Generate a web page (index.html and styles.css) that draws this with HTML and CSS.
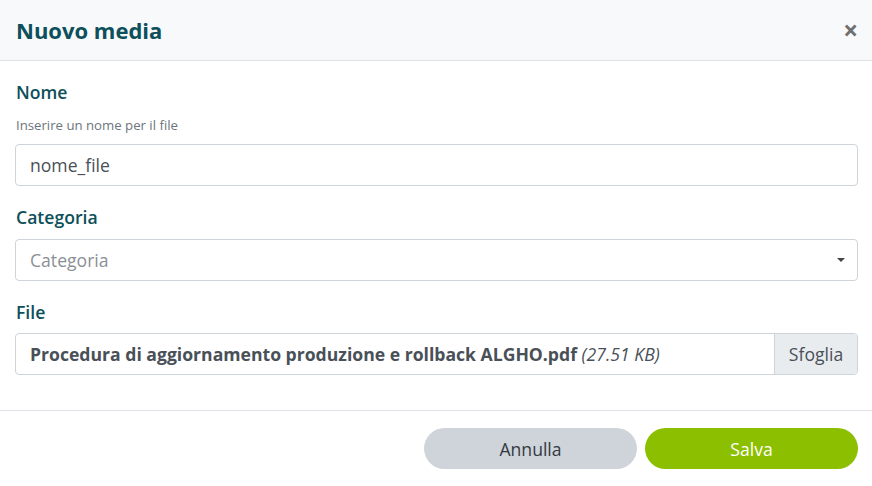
FILE: index.html
```html
<!DOCTYPE html>
<html lang="it">
<head>
<meta charset="utf-8">
<link rel="stylesheet" href="styles.css">
</head>
<body>
<div class="modal">
  <div class="modal-header">
    <h1 class="modal-title">Nuovo media</h1>
    <button class="close" type="button">&times;</button>
  </div>
  <div class="modal-body">
    <div class="field">
      <label class="label">Nome</label>
      <div class="help">Inserire un nome per il file</div>
      <div class="input">nome_file</div>
    </div>
    <div class="field">
      <label class="label">Categoria</label>
      <div class="input select"><span class="placeholder">Categoria</span><span class="caret"></span></div>
    </div>
    <div class="field">
      <label class="label">File</label>
      <div class="file-input">
        <div class="file-name"><span><b>Procedura di aggiornamento produzione e rollback ALGHO.pdf</b> <i>(27.51 KB)</i></span></div>
        <div class="browse">Sfoglia</div>
      </div>
    </div>
  </div>
  <div class="modal-footer">
    <button class="btn btn-cancel" type="button">Annulla</button>
    <button class="btn btn-save" type="button">Salva</button>
  </div>
</div>
</body>
</html>
```
FILE: styles.css
```css
* { box-sizing: border-box; }
html, body { margin: 0; padding: 0; background: #fff; }
body { font-family: "Open Sans", "Noto Sans", sans-serif; color: #495057; }
.modal { width: 872px; height: 486px; display: flex; flex-direction: column; }
.modal-header {
  height: 61px;
  background: #f7f9fa;
  border-bottom: 1px solid #dee2e6;
  display: flex; align-items: center; justify-content: space-between;
  padding: 0 14px 0 16px;
}
.modal-title { margin: 0; font-size: 22px; font-weight: 700; color: #0d4f5a; line-height: 1; }
.close {
  border: 0; background: none; padding: 0; font-family: inherit;
  font-size: 26px; font-weight: 700; color: #6f6f6f; line-height: 1; cursor: pointer;
}
.modal-body { padding: 18px 14px 0 15px; display: flex; flex-direction: column; gap: 18px; flex: 1; }
.field { display: flex; flex-direction: column; }
.label { font-size: 17.6px; font-weight: 600; color: #0d4f5a; line-height: 26px; margin-left: 1px; }
.help { font-size: 13.2px; color: #6c757d; line-height: 20px; margin-top: 10px; margin-bottom: 9px; margin-left: 1px; font-weight: 400; }
.label + .input { margin-top: 9px; }
.label + .file-input { margin-top: 8px; }
.input {
  height: 42px; border: 1px solid #ced4da; border-radius: 4px;
  padding: 0 14px; display: flex; align-items: center;
  font-size: 17.6px; color: #495057;
}
.select { justify-content: space-between; }
.placeholder { color: #8a9096; }
.caret { width: 0; height: 0; border-left: 4px solid transparent; border-right: 4px solid transparent; border-top: 4px solid #444; margin-right: -2px; }
.file-input {
  height: 42px; border: 1px solid #ced4da; border-radius: 4px; display: flex; overflow: hidden;
}
.file-name { flex: 1; display: flex; align-items: center; padding: 0 14px; font-size: 17.6px; color: #495057; white-space: pre; }
.file-name b { font-weight: 700; }
.file-name i { font-style: italic; }
.browse {
  width: 83px; background: #e9ecef; border-left: 1px solid #ced4da;
  display: flex; align-items: center; justify-content: center; font-size: 17.6px; color: #495057;
}
.modal-footer {
  height: 76px; border-top: 1px solid #dee2e6;
  display: flex; align-items: center; justify-content: flex-end; gap: 8px;
  padding: 0 14px 0 0;
}
.btn {
  width: 213px; height: 41px; border-radius: 21px; border: 0; font-family: inherit; font-size: 17.6px; cursor: pointer;
}
.btn-cancel { background: #ced4da; color: #343a40; }
.btn-save { background: #8bbf00; color: #fff; }
```
